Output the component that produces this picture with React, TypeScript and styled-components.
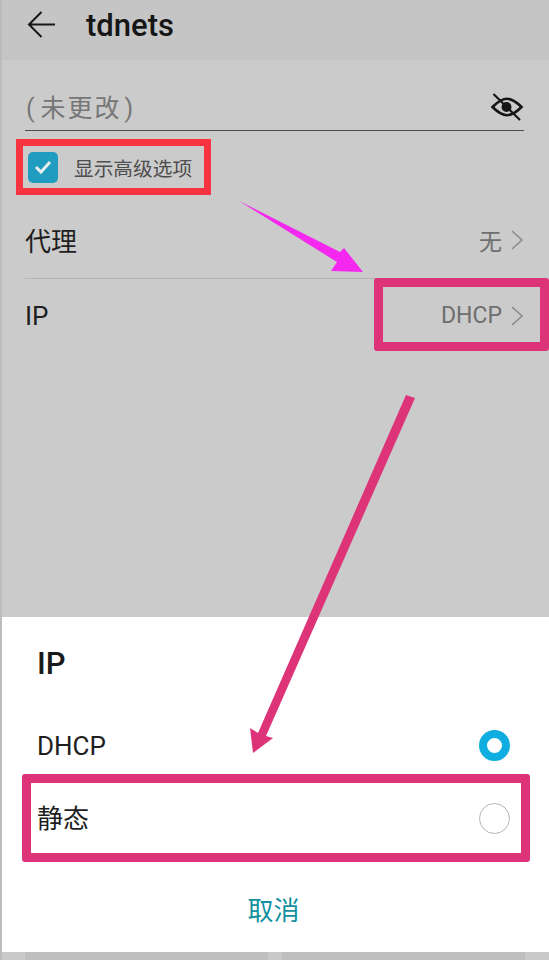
import React from 'react';
import styled, { createGlobalStyle } from 'styled-components';

const GlobalStyle = createGlobalStyle`
    html, body {
        margin: 0;
        padding: 0;
        background: #cbcbcb;
    }
    body {
        font-family: Roboto, "Noto Sans CJK SC", sans-serif;
    }
`;

const App: React.FC = () => (
    <Screen>
        <GlobalStyle />
        <Settings>
            <Header>
                <svg width="30" height="30" viewBox="0 0 30 30" fill="none" stroke="#161616" strokeWidth="2">
                    <path d="M28 14.5H2M14.5 2L2 14.5L14.5 27" />
                </svg>
                <Title>tdnets</Title>
            </Header>
            <Body>
                <PasswordRow>
                    <Placeholder><Paren $open>(</Paren>未更改<Paren>)</Paren></Placeholder>
                    <svg width="34" height="30" viewBox="0 0 34 30" fill="none" stroke="#161616" strokeWidth="2.6">
                        <path d="M2.5 15C9 8.5 12.5 6.8 17 6.8s8 1.7 14.5 8.2C25 21.5 21.5 23.2 17 23.2S9 21.5 2.5 15z" />
                        <circle cx="16.5" cy="15" r="5" fill="#161616" stroke="none" />
                        <path d="M3.5 2l26.5 26" strokeWidth="2.2" />
                    </svg>
                </PasswordRow>
                <AdvancedRow>
                    <CheckBox>
                        <svg width="20" height="16" viewBox="0 0 20 16" fill="none" stroke="#e8eef0" strokeWidth="3">
                            <path d="M3 8l5 5l9-10" />
                        </svg>
                    </CheckBox>
                    <AdvancedLabel>显示高级选项</AdvancedLabel>
                </AdvancedRow>
                <SettingRow $divided>
                    <SettingName $cjk>代理</SettingName>
                    <SettingValue $cjk>无<Chevron /></SettingValue>
                </SettingRow>
                <SettingRow>
                    <SettingName>IP</SettingName>
                    <SettingValue>DHCP<Chevron /></SettingValue>
                </SettingRow>
            </Body>
        </Settings>
        <Sheet>
            <SheetTitle>IP</SheetTitle>
            <OptionRow>
                <OptionName>DHCP</OptionName>
                <Radio $checked />
            </OptionRow>
            <OptionRow>
                <OptionName $cjk>静态</OptionName>
                <Radio />
            </OptionRow>
            <CancelButton>取消</CancelButton>
        </Sheet>
        <BottomStrip>
            <StripKey />
            <StripKey />
        </BottomStrip>

        <RedBox />
        <PinkBox $left={374} $top={278} $width={175} $height={73} />
        <PinkBox $left={22} $top={774} $width={508} $height={88} />
        <Arrows width="549" height="960" viewBox="0 0 549 960">
            <polygon fill="#f528f0" points="239,201 340,252 344,248 363,272 331,271 337,262" />
            <polygon fill="#dd3378" points="406,395 415,398 266,736 273,738 253,753 250,728 258,733" />
        </Arrows>
    </Screen>
);

const Chevron: React.FC = () => (
    <ChevronIcon width="14" height="22" viewBox="0 0 14 22" fill="none" stroke="#8b8b8b" strokeWidth="1.6">
        <path d="M2 2l10 9l-10 9" />
    </ChevronIcon>
);

const Screen = styled.div`
    position: relative;
    width: 549px;
    height: 960px;
    overflow: hidden;
    display: flex;
    flex-direction: column;
    background: #cbcbcb;

    &::after {
        content: '';
        position: absolute;
        left: 0;
        top: 0;
        bottom: 0;
        width: 2px;
        background: #bcbcbc;
    }
`;

const Settings = styled.div`
    height: 617px;
    flex-shrink: 0;
`;

const Header = styled.div`
    height: 60px;
    box-sizing: border-box;
    padding: 0 0 10px 27px;
    display: flex;
    align-items: center;
    gap: 29px;
    background: #c5c5c5;
`;

const Title = styled.div`
    font-size: 31px;
    font-weight: 500;
    color: #161616;
`;

const Body = styled.div`
    padding: 0 25px;
`;

const PasswordRow = styled.div`
    height: 71px;
    box-sizing: border-box;
    padding: 24px 0 0;
    display: flex;
    justify-content: space-between;
    align-items: center;
    border-bottom: 1px solid #4d4d4d;
`;

const Placeholder = styled.div`
    font-size: 25px;
    letter-spacing: 2px;
    color: #767676;
    margin-top: -3px;
`;

const Paren = styled.span<{ $open?: boolean }>`
    margin: ${({ $open }) => ($open ? '0 4px 0 1px' : '0 0 0 3px')};
`;

const AdvancedRow = styled.div`
    height: 74px;
    box-sizing: border-box;
    padding: 0 0 2px 3px;
    display: flex;
    align-items: center;
    gap: 16px;
`;

const CheckBox = styled.div`
    width: 30px;
    height: 31px;
    border-radius: 5px;
    background: #1f9cc0;
    display: flex;
    align-items: center;
    justify-content: center;
`;

const AdvancedLabel = styled.div`
    font-size: 19.7px;
    color: #4e4e4e;
`;

const SettingRow = styled.div<{ $divided?: boolean }>`
    height: 73px;
    display: flex;
    align-items: center;
    justify-content: space-between;
    border-bottom: ${({ $divided }) => ($divided ? '1px solid #b4b4b4' : 'none')};
`;

const SettingName = styled.div<{ $cjk?: boolean }>`
    font-size: 26px;
    color: #1e1e1e;
    margin-top: ${({ $cjk }) => ($cjk ? '-4px' : '0')};
`;

const SettingValue = styled.div<{ $cjk?: boolean }>`
    font-size: 23px;
    color: #6e6e6e;
    display: flex;
    align-items: center;
    gap: 8px;
    margin-top: ${({ $cjk }) => ($cjk ? '-4px' : '0')};
`;

const ChevronIcon = styled.svg`
    display: block;
`;

const Sheet = styled.div`
    height: 335px;
    flex-shrink: 0;
    box-sizing: border-box;
    padding: 0 39px 0 37px;
    display: flex;
    flex-direction: column;
    background: #ffffff;
`;

const SheetTitle = styled.div`
    height: 92px;
    display: flex;
    align-items: center;
    font-size: 31px;
    font-weight: 500;
    color: #1a1a1a;
`;

const OptionRow = styled.div`
    height: 73px;
    display: flex;
    align-items: center;
    justify-content: space-between;
`;

const OptionName = styled.div<{ $cjk?: boolean }>`
    font-size: 26px;
    color: #1e1e1e;
    margin-top: ${({ $cjk }) => ($cjk ? '-4px' : '0')};
`;

const Radio = styled.div<{ $checked?: boolean }>`
    width: 31px;
    height: 31px;
    box-sizing: border-box;
    border-radius: 50%;
    border: ${({ $checked }) => ($checked ? '8px solid #10aee0' : '1.5px solid #b5b5b5')};
    background: #ffffff;
`;

const CancelButton = styled.div`
    flex: 1;
    display: flex;
    align-items: center;
    justify-content: center;
    padding: 10px 0 0;
    font-size: 26px;
    color: #11909f;
`;

const BottomStrip = styled.div`
    flex: 1;
    display: flex;
    gap: 14px;
    padding: 0 24px 0 25px;
    background: #c9c9c9;
`;

const StripKey = styled.div`
    flex: 1;
    background: #bfbfbf;
`;

const RedBox = styled.div`
    position: absolute;
    left: 16px;
    top: 139px;
    width: 195px;
    height: 56px;
    box-sizing: border-box;
    border: 7px solid #f7343f;
`;

const PinkBox = styled.div<{ $left: number; $top: number; $width: number; $height: number }>`
    position: absolute;
    left: ${({ $left }) => $left}px;
    top: ${({ $top }) => $top}px;
    width: ${({ $width }) => $width}px;
    height: ${({ $height }) => $height}px;
    box-sizing: border-box;
    border: 9px solid #dd3378;
    border-radius: 3px;
`;

const Arrows = styled.svg`
    position: absolute;
    left: 0;
    top: 0;
    pointer-events: none;
`;

export default App;
